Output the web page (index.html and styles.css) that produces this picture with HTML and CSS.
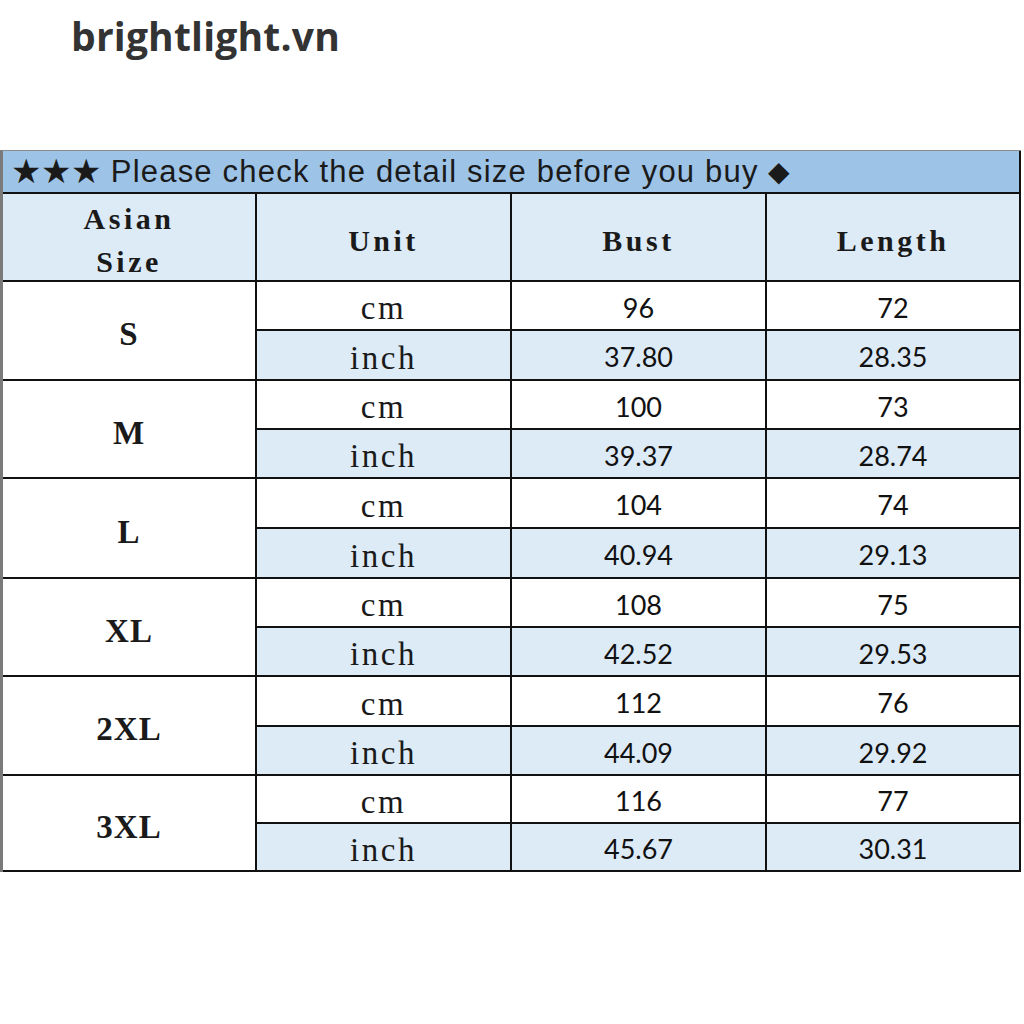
FILE: index.html
```html
<!DOCTYPE html>
<html>
<head>
<meta charset="utf-8">
<link rel="stylesheet" href="styles.css">
</head>
<body>
<header class="logo">brightlight.vn</header>
<section class="chart">
  <div class="title"><span class="stars">★★★</span> Please check the detail size before you buy <span class="diamond">◆</span></div>
  <div class="head"><span>Asian<br>Size</span></div>
  <div class="head">Unit</div>
  <div class="head">Bust</div>
  <div class="head">Length</div>

  <div class="size">S</div>
  <div class="unit">cm</div><div class="num">96</div><div class="num">72</div>
  <div class="unit alt">inch</div><div class="num alt">37.80</div><div class="num alt">28.35</div>

  <div class="size">M</div>
  <div class="unit">cm</div><div class="num">100</div><div class="num">73</div>
  <div class="unit alt">inch</div><div class="num alt">39.37</div><div class="num alt">28.74</div>

  <div class="size">L</div>
  <div class="unit">cm</div><div class="num">104</div><div class="num">74</div>
  <div class="unit alt">inch</div><div class="num alt">40.94</div><div class="num alt">29.13</div>

  <div class="size">XL</div>
  <div class="unit">cm</div><div class="num">108</div><div class="num">75</div>
  <div class="unit alt">inch</div><div class="num alt">42.52</div><div class="num alt">29.53</div>

  <div class="size">2XL</div>
  <div class="unit">cm</div><div class="num">112</div><div class="num">76</div>
  <div class="unit alt">inch</div><div class="num alt">44.09</div><div class="num alt">29.92</div>

  <div class="size">3XL</div>
  <div class="unit">cm</div><div class="num">116</div><div class="num">77</div>
  <div class="unit alt">inch</div><div class="num alt">45.67</div><div class="num alt">30.31</div>
</section>
</body>
</html>
```
FILE: styles.css
```css
html, body {
  margin: 0;
  padding: 0;
  background: #ffffff;
}
body {
  width: 1024px;
  height: 1024px;
  overflow: hidden;
}
.logo {
  font-family: "Open Sans", "Noto Sans", sans-serif;
  font-weight: 700;
  font-size: 39px;
  color: #333333;
  padding: 10px 0 0 71px;
  height: 150px;
  box-sizing: border-box;
  line-height: 52px;
  letter-spacing: 0.2px;
}
.chart {
  width: 1021px;
  box-sizing: border-box;
  display: grid;
  grid-template-columns: 252px 253px 253px 252px;
  grid-template-rows: 41px 86px 47px 48px 47px 47px 48px 48px 47px 47px 48px 47px 46px 46px;
  gap: 2px;
  background: #111111;
  border-left: 3px solid #7a7a7a;
  border-top: 1px solid #8a8a8a;
  padding: 0 2px 2px 0;
  color: #1a1a1a;
}
.chart > div {
  display: flex;
  align-items: center;
  justify-content: center;
  background: #ffffff;
}
.chart > .title {
  grid-column: 1 / 5;
  justify-content: flex-start;
  background: #9dc3e6;
  font-family: "Liberation Sans", Arial, sans-serif;
  font-size: 31px;
  letter-spacing: 1.2px;
  padding-left: 8px;
  white-space: pre;
  line-height: 41px;
}
.stars {
  font-size: 34px;
  letter-spacing: 0;
}
.diamond {
  font-size: 28px;
}
.chart > .head {
  background: #ddebf7;
  font-family: "Liberation Serif", "Times New Roman", serif;
  font-weight: 700;
  font-size: 30px;
  letter-spacing: 3.5px;
  text-align: center;
  line-height: 43px;
  padding-top: 6px;
}
.chart > .size {
  grid-row: span 2;
  font-family: "Liberation Serif", "Times New Roman", serif;
  font-weight: 700;
  font-size: 33px;
  letter-spacing: 1px;
  padding-top: 8px;
}
.chart > .unit {
  font-family: "Liberation Serif", "Times New Roman", serif;
  font-size: 33px;
  letter-spacing: 2.5px;
  padding-top: 6px;
}
.chart > .num {
  font-family: Lato, "Open Sans", sans-serif;
  font-size: 27px;
  padding-top: 3px;
  color: #111111;
}
.chart > .alt {
  background: #ddebf7;
}
```
